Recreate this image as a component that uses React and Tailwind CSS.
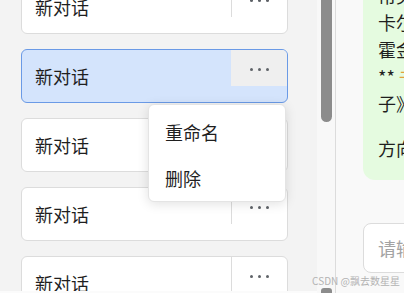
import { useState } from 'react';

const FONT = '"Noto Sans CJK SC", "Noto Sans", "Liberation Sans", sans-serif';

const conversations = [
  { id: 1, title: '新对话' },
  { id: 2, title: '新对话' },
  { id: 3, title: '新对话' },
  { id: 4, title: '新对话' },
  { id: 5, title: '新对话' }
];

const Dots = () => (
  <div className="flex items-center gap-[5px] pt-[2px]">
    <span className="w-[3px] h-[3px] rounded-full bg-[#5f6368]" />
    <span className="w-[3px] h-[3px] rounded-full bg-[#5f6368]" />
    <span className="w-[3px] h-[3px] rounded-full bg-[#5f6368]" />
  </div>
);

const ConversationItem = ({ title, active, menuOpen }) => (
  <div
    className={`relative flex h-[54px] shrink-0 rounded-[6px] border ${
      active ? 'bg-[#d4e4fc] border-[#6a9ae6]' : 'bg-white border-[#dcdcdc]'
    }`}
  >
    <div className="flex-1 flex items-center pl-[13px] text-[18px] text-[#1f1f1f]">{title}</div>
    <button
      className={`self-start flex items-center justify-center w-[56px] h-[36px] ${
        active ? 'bg-[#efefef] rounded-tr-[5px]' : 'border-l border-[#dcdcdc]'
      }`}
    >
      <Dots />
    </button>

    {/* Context menu for the active item */}
    {menuOpen && (
      <div className="absolute top-[54px] right-[1px] z-10 w-[138px] pt-1 bg-white rounded-[6px] border border-[#e4e4e4] shadow-[0_2px_12px_rgba(0,0,0,0.12)]">
        <div className="h-[46px] flex items-center pl-4 text-[18px] text-[#1f1f1f]">重命名</div>
        <div className="h-[46px] flex items-center pl-4 text-[18px] text-[#1f1f1f]">删除</div>
      </div>
    )}
  </div>
);

export default function App() {
  const [activeId] = useState(2);

  return (
    <div className="relative flex w-[404px] h-[293px] overflow-hidden bg-[#f3f3f3]" style={{ fontFamily: FONT }}>
      {/* Sidebar list */}
      <div className="w-[317px] shrink-0 flex flex-col">
        <div className="flex-1 overflow-hidden">
          <div className="-mt-[20px] pl-[21px] pr-[29px] flex flex-col gap-[15px]">
            {conversations.map((c) => (
              <ConversationItem
                key={c.id}
                title={c.title}
                active={c.id === activeId}
                menuOpen={c.id === activeId}
              />
            ))}
          </div>
        </div>
        <div className="h-[2px] bg-[#fbfbfb]" />
      </div>

      {/* Sidebar scrollbar */}
      <div className="w-[19px] shrink-0 flex flex-col items-center bg-[#f8f8f8] border-r border-[#dcdcdc]">
        <div className="w-[11px] h-[122px] rounded-b-full bg-[#8c8c8c]" />
        <div className="mt-auto w-[11px] h-[5px] rounded-t-[3px] bg-[#8c8c8c]" />
      </div>

      {/* Chat panel */}
      <div className="flex-1 min-w-0 overflow-hidden bg-[#f9f9f9] flex flex-col">
        <div className="w-[520px] flex-1 min-h-0 flex flex-col pl-[27px]">
          <div className="flex-1 min-h-0 flex flex-col justify-end pb-[43px]">
            <div className="shrink-0 rounded-[12px] bg-[#e5fbe0] pl-[15px] pt-[12px] pb-[18px] text-[18px] leading-[27px] text-[#1f1f1f] whitespace-nowrap">
              <div>常见的推荐有：</div>
              <div>卡尔·萨根《宇宙》</div>
              <div>霍金《时间简史》</div>
              <div>
                ** <span className="text-[#e3a13b]">书</span>《上帝掷骰
              </div>
              <div>子》**</div>
              <div className="mt-[18px]">方向选择建议</div>
            </div>
          </div>
          <div className="h-[50px] shrink-0 rounded-[8px] border border-[#dcdcdc] bg-white flex items-center pl-[14px] text-[18px] text-[#a3a3a3]">
            请输入你的问题
          </div>
          <div className="h-[20px] shrink-0" />
        </div>
      </div>

      {/* Watermark */}
      <div className="absolute right-[4px] bottom-[6px] text-[10px] leading-[12px] text-[#b3b3b3] whitespace-nowrap">
        CSDN @飘去数星星
      </div>
    </div>
  );
}
